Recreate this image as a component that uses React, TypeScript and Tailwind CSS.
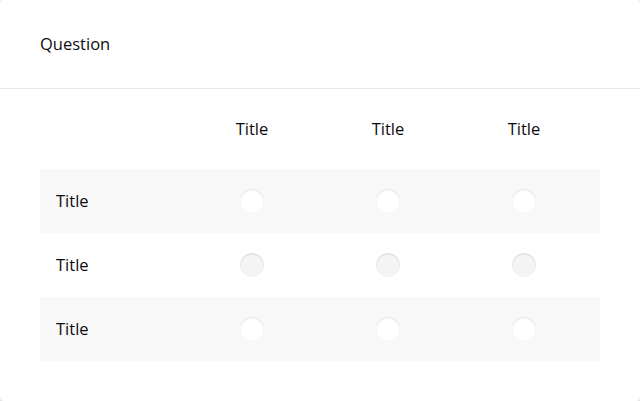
const columns = ["Title", "Title", "Title"];
const rows = ["Title", "Title", "Title"];

function Radio({ shaded }: { shaded: boolean }) {
    return (
        <span
            className={`block w-6 h-6 rounded-full shadow-[inset_0_1px_2px_rgba(0,0,0,0.12)] ${
                shaded ? "bg-white" : "bg-[#f4f4f4]"
            }`}
        />
    );
}

export default function App() {
    return (
        <div
            className="w-[640px] h-[401px] bg-[#f3f3f3] text-[#0d0d0d] text-[16.5px] font-medium"
            style={{ fontFamily: '"Open Sans", sans-serif' }}
        >
            <div className="h-full bg-white rounded-[4px] shadow-[0_1px_2px_rgba(0,0,0,0.15)]">
                <div className="h-[89px] flex items-center px-10 border-b border-[#e8e8e8]">
                    <span>Question</span>
                </div>

                <div className="px-10">
                    <div className="grid grid-cols-[144px_136px_136px_136px] h-[80px] items-center">
                        <div />
                        {columns.map((c, i) => (
                            <div key={i} className="text-center">
                                {c}
                            </div>
                        ))}
                    </div>

                    {rows.map((r, i) => {
                        const shaded = i % 2 === 0;
                        return (
                            <div
                                key={i}
                                className={`grid grid-cols-[144px_136px_136px_136px] h-16 items-center ${
                                    shaded ? "bg-[#f8f8f8]" : ""
                                }`}
                            >
                                <div className="pl-4">{r}</div>
                                {columns.map((_, j) => (
                                    <div key={j} className="flex justify-center">
                                        <Radio shaded={shaded} />
                                    </div>
                                ))}
                            </div>
                        );
                    })}
                </div>
            </div>
        </div>
    );
}
